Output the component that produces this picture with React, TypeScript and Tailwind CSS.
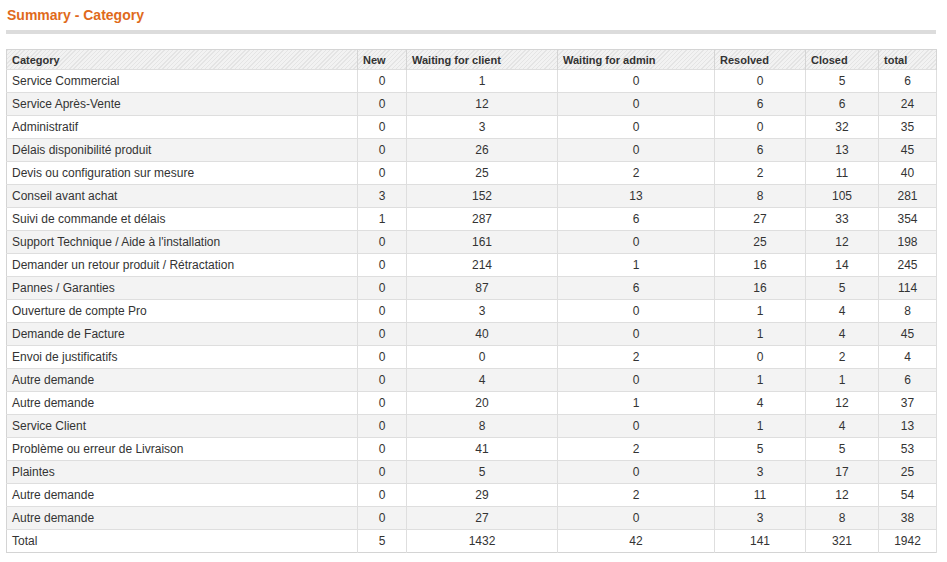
import React from 'react';

const rows: [string, number, number, number, number, number, number][] = [
  ['Service Commercial', 0, 1, 0, 0, 5, 6],
  ['Service Après-Vente', 0, 12, 0, 6, 6, 24],
  ['Administratif', 0, 3, 0, 0, 32, 35],
  ['Délais disponibilité produit', 0, 26, 0, 6, 13, 45],
  ['Devis ou configuration sur mesure', 0, 25, 2, 2, 11, 40],
  ['Conseil avant achat', 3, 152, 13, 8, 105, 281],
  ['Suivi de commande et délais', 1, 287, 6, 27, 33, 354],
  ["Support Technique / Aide à l'installation", 0, 161, 0, 25, 12, 198],
  ['Demander un retour produit / Rétractation', 0, 214, 1, 16, 14, 245],
  ['Pannes / Garanties', 0, 87, 6, 16, 5, 114],
  ['Ouverture de compte Pro', 0, 3, 0, 1, 4, 8],
  ['Demande de Facture', 0, 40, 0, 1, 4, 45],
  ['Envoi de justificatifs', 0, 0, 2, 0, 2, 4],
  ['Autre demande', 0, 4, 0, 1, 1, 6],
  ['Autre demande', 0, 20, 1, 4, 12, 37],
  ['Service Client', 0, 8, 0, 1, 4, 13],
  ['Problème ou erreur de Livraison', 0, 41, 2, 5, 5, 53],
  ['Plaintes', 0, 5, 0, 3, 17, 25],
  ['Autre demande', 0, 29, 2, 11, 12, 54],
  ['Autre demande', 0, 27, 0, 3, 8, 38],
  ['Total', 5, 1432, 42, 141, 321, 1942],
];

const headers = ['Category', 'New', 'Waiting for client', 'Waiting for admin', 'Resolved', 'Closed', 'total'];
const widths = ['w-[351px]', 'w-[49px]', 'w-[151px]', 'w-[157px]', 'w-[91px]', 'w-[73px]', 'w-[58px]'];

export default function App() {
  return (
    <div className="w-[947px] h-[562px] bg-white px-[6px] pt-[6px] text-[12px] text-[#333] font-[Liberation_Sans]">
      <h2 className="text-[14px] font-bold text-[#e06a1b] leading-[18px] pl-[1px]">Summary - Category</h2>
      <div className="mt-[6px] h-[4px] w-[930px] bg-[#dcdcdc]" />
      <table className="mt-[15px] w-[930px] table-fixed border-collapse border border-[#d4d4d4]">
        <thead>
          <tr className="h-[20px] bg-[repeating-linear-gradient(135deg,#e4e4e4_0px,#e4e4e4_1px,#f2f2f2_1px,#f2f2f2_3px)]">
            {headers.map((h, i) => (
              <th key={h} className={`${widths[i]} border-r border-[#d4d4d4] text-left font-bold text-[11px] text-[#333] px-[5px] pt-[2px]`}>
                {h}
              </th>
            ))}
          </tr>
        </thead>
        <tbody>
          {rows.map((r, idx) => (
            <tr key={idx} className={`h-[23px] border-t border-[#dedede] ${idx % 2 === 1 ? 'bg-[#f3f3f3]' : 'bg-white'}`}>
              {r.map((c, i) => (
                <td key={i} className={`border-r border-[#dedede] px-[5px] ${i === 0 ? 'text-left' : 'text-center'}`}>
                  {c}
                </td>
              ))}
            </tr>
          ))}
        </tbody>
      </table>
    </div>
  );
}
